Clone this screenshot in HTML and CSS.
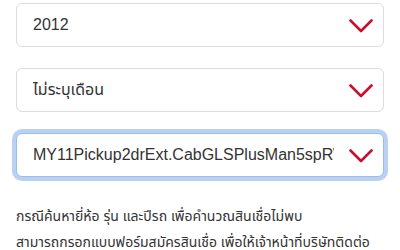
FILE: index.html
```html
<!DOCTYPE html>
<html lang="th">
<head>
    <meta charset="UTF-8">
    <meta name="viewport" content="width=device-width, initial-scale=1.0">
    <title>เลือกรุ่นรถ</title>
    <link rel="stylesheet" href="styles.css">
</head>
<body>
    <div class="form">
        <div class="select">
            <span class="value">2012</span>
            <svg class="arrow" width="24" height="14" viewBox="0 0 24 14"><path d="M1.5 1.5 L12 12 L22.5 1.5" fill="none" stroke="#c8102e" stroke-width="2.6" stroke-linecap="round" stroke-linejoin="round"/></svg>
        </div>
        <div class="select">
            <span class="value">ไม่ระบุเดือน</span>
            <svg class="arrow" width="24" height="14" viewBox="0 0 24 14"><path d="M1.5 1.5 L12 12 L22.5 1.5" fill="none" stroke="#c8102e" stroke-width="2.6" stroke-linecap="round" stroke-linejoin="round"/></svg>
        </div>
        <div class="select focus">
            <span class="value">MY11Pickup2drExt.CabGLSPlusMan5spRWD</span>
            <svg class="arrow" width="24" height="14" viewBox="0 0 24 14"><path d="M1.5 1.5 L12 12 L22.5 1.5" fill="none" stroke="#c8102e" stroke-width="2.6" stroke-linecap="round" stroke-linejoin="round"/></svg>
        </div>
        <p class="note">กรณีค้นหายี่ห้อ รุ่น และปีรถ เพื่อคำนวณสินเชื่อไม่พบ<br>สามารถกรอกแบบฟอร์มสมัครสินเชื่อ เพื่อให้เจ้าหน้าที่บริษัทติดต่อ กลับ</p>
    </div>
</body>
</html>
```

FILE: styles.css
```css
*{
    padding: 0;
    margin: 0;
    box-sizing: border-box;
}
body{
    background-color: #fff;
    font-family: "Liberation Sans", "Noto Sans Thai", "Noto Sans Thai UI", sans-serif;
    color: #333;
}
.form{
    padding: 3px 16px 0;
    display: flex;
    flex-direction: column;
    gap: 21px;
}
.select{
    height: 44px;
    border: 1px solid #dcdcdc;
    border-radius: 6px;
    background-color: #fff;
    display: flex;
    align-items: center;
    padding: 0 10px 0 16px;
}
.select .value{
    flex: 1;
    font-size: 16px;
    white-space: nowrap;
    overflow: hidden;
    margin-right: 15px;
}
.select .arrow{
    flex: none;
    margin-top: 2px;
}
.focus{
    border-color: #9dbde6;
    box-shadow: 0 0 0 4px #b9d2f3;
}
.note{
    margin-top: 5px;
    font-size: 14px;
    line-height: 26px;
}
```
